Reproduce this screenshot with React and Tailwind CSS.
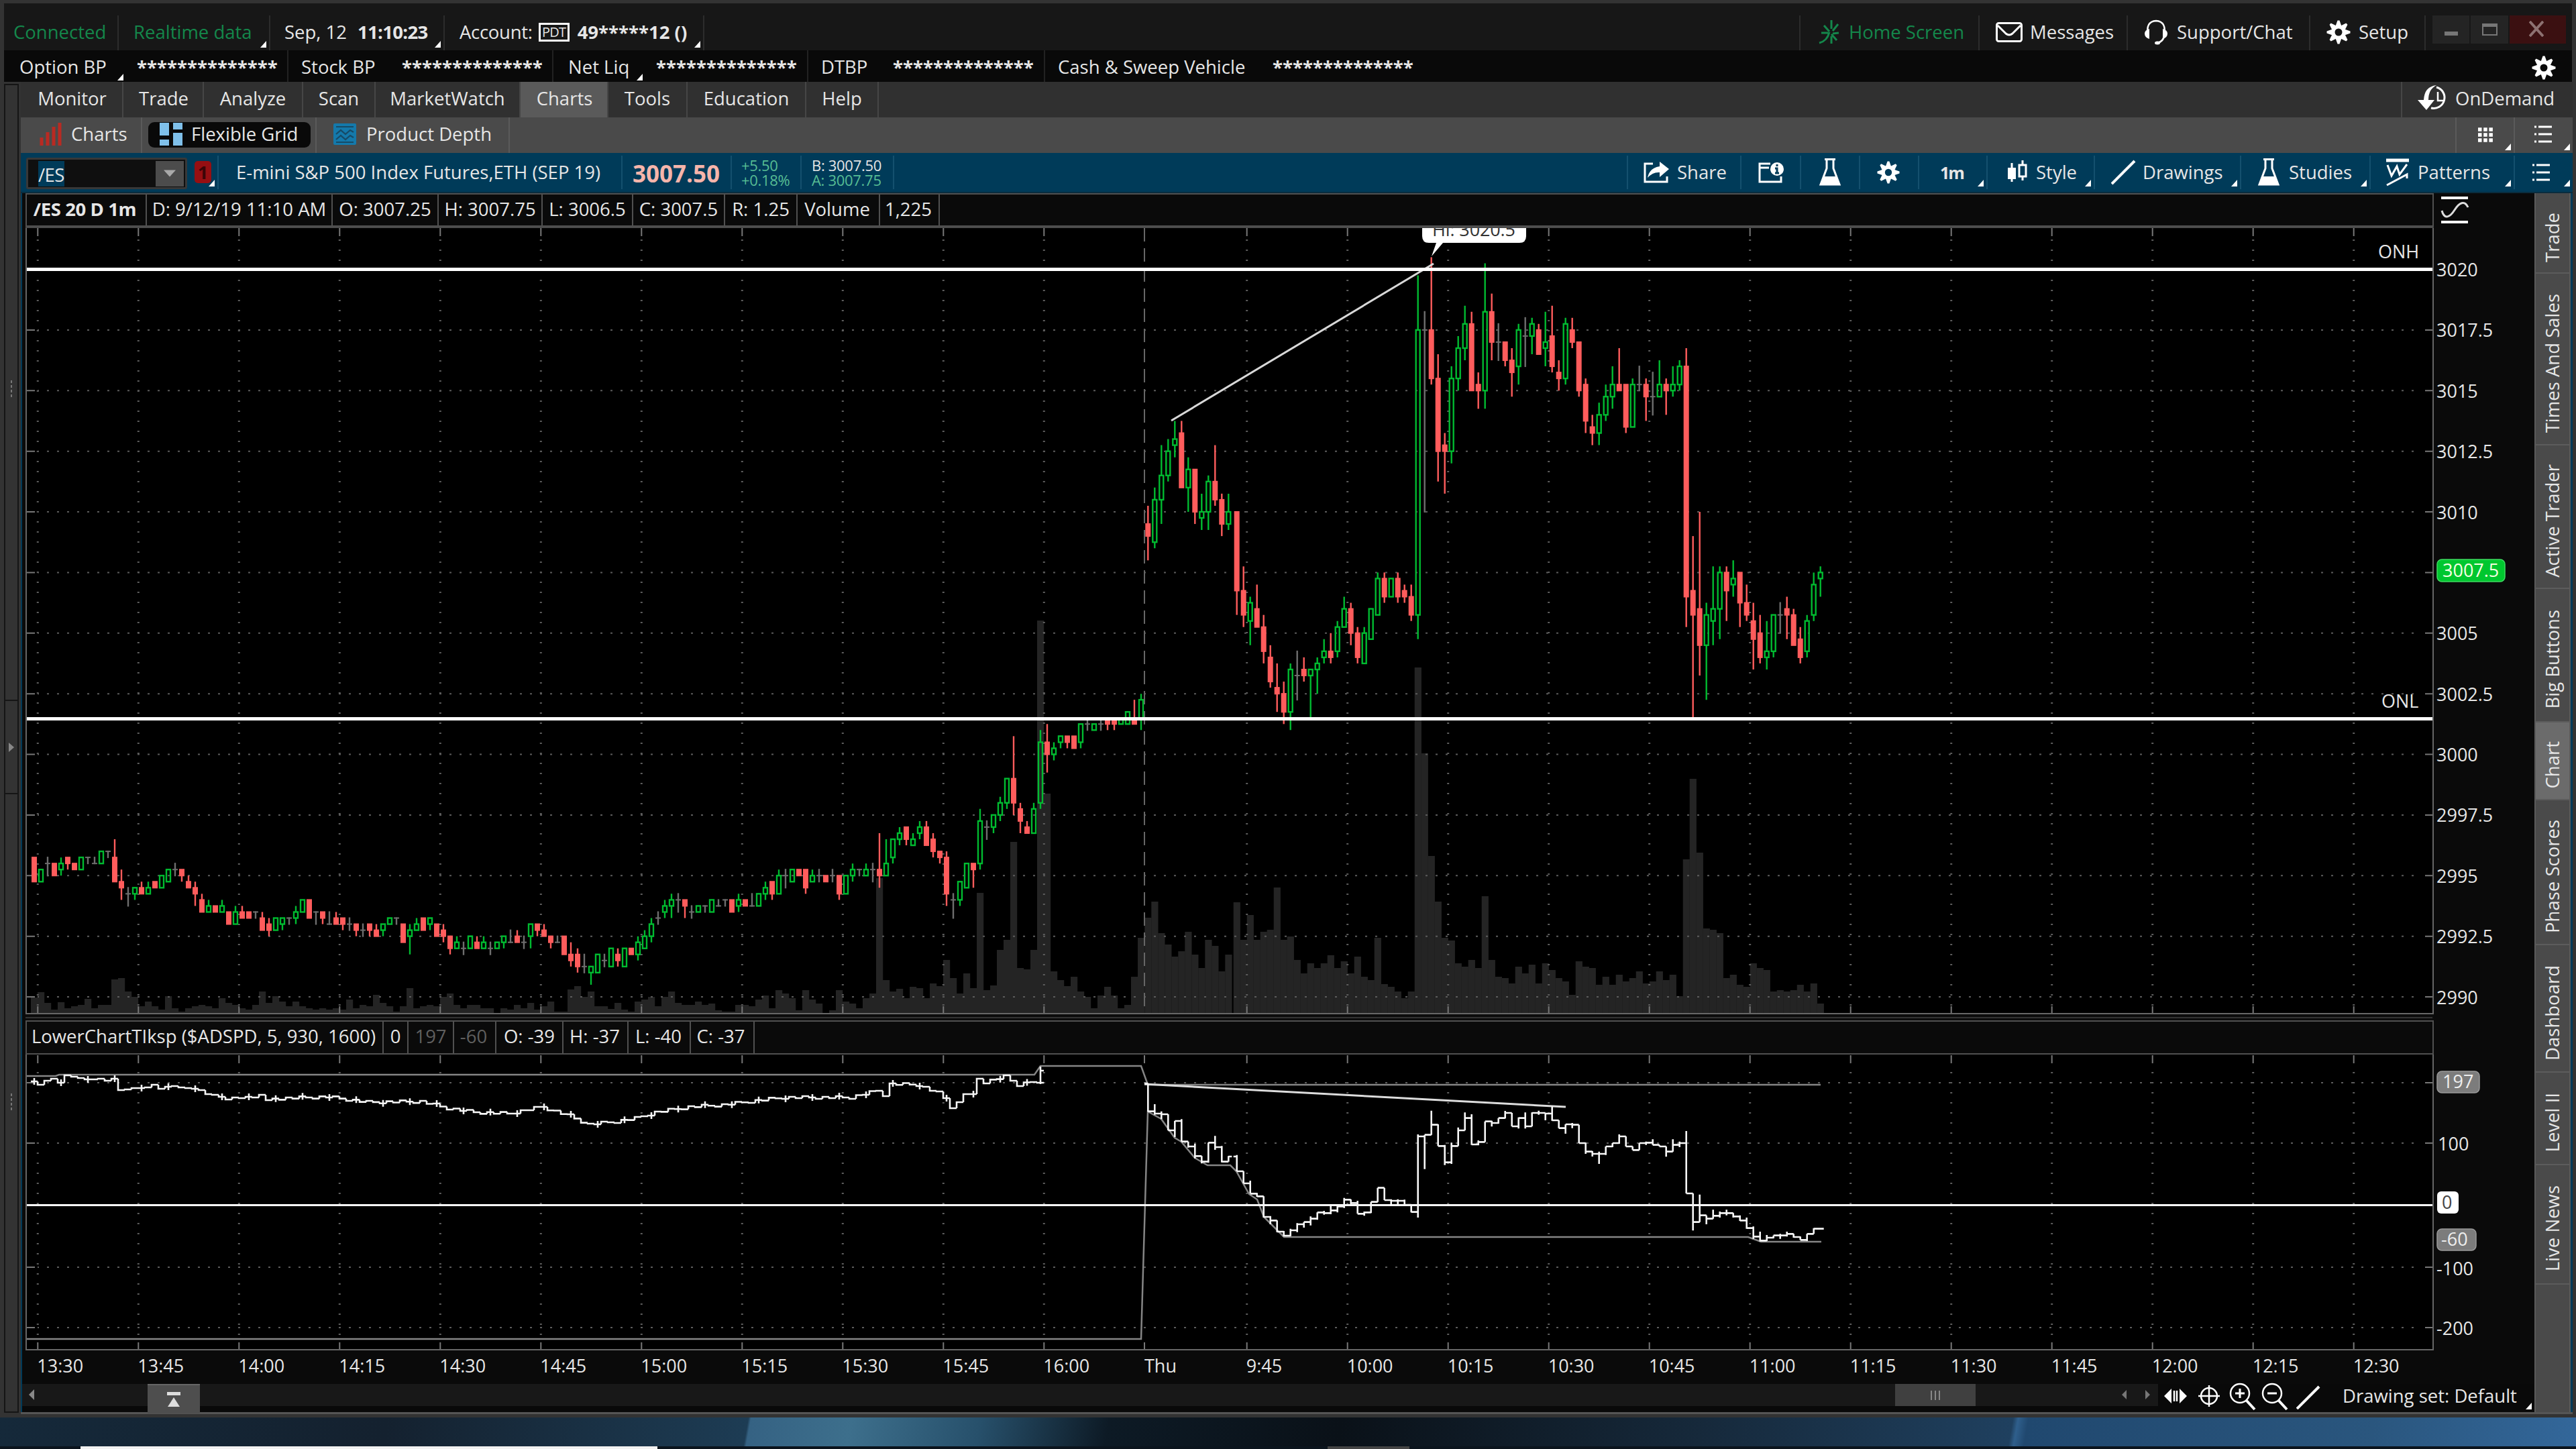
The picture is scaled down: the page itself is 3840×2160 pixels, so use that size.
import React from 'react';

// candle rows: kind, high, body top, body bottom, low (quarter points from the session base)
const DAY1 = `r 3 3 -1 -1,g 1 1 -1 -1,d 3 2 2 0,r 2 2 0 0,g 3 2 1 0,r 3 3 2 1,r 2 2 1 1,g 3 3 1 1,d 3 3 3 2,d 3 2 2 2,
g 4 4 2 2,d 4 4 4 3,r 6 3 -1 -1,r 1 -1 -2 -4,d -2 -3 -3 -5,g -2 -2 -3 -4,r -1 -2 -3 -3,g -1 -2 -3 -3,r -1 -1 -2 -2,g 0 0 -2 -2,
g 1 1 -1 -1,d 2 1 1 0,r 1 1 0 -1,r 0 -1 -2 -2,r -1 -2 -3 -5,r -3 -4 -6 -6,g -4 -5 -6 -6,r -5 -5 -6 -6,g -4 -5 -6 -6,r -6 -6 -8 -8,
g -5 -6 -8 -8,r -5 -6 -7 -7,r -6 -6 -7 -7,d -6 -6 -6 -7,r -6 -7 -9 -9,r -7 -8 -9 -10,g -7 -7 -9 -9,g -7 -7 -8 -9,d -7 -7 -7 -8,g -5 -6 -7 -8,
g -4 -4 -6 -6,r -4 -4 -7 -7,d -6 -6 -6 -8,r -6 -6 -7 -8,d -6 -8 -8 -8,r -6 -7 -8 -8,r -7 -7 -8 -9,d -7 -8 -8 -9,r -8 -8 -9 -10,d -8 -9 -9 -10,
r -8 -8 -9 -10,r -8 -9 -10 -10,g -8 -8 -9 -10,g -7 -7 -8 -8,d -7 -7 -7 -8,r -8 -8 -11 -11,g -8 -9 -10 -13,g -7 -8 -9 -9,r -7 -7 -9 -9,g -7 -7 -8 -9,
r -8 -8 -10 -10,r -8 -9 -10 -11,r -10 -10 -12 -13,g -10 -11 -12 -12,d -11 -12 -12 -13,g -10 -10 -12 -12,r -10 -11 -12 -12,g -10 -11 -12 -12,d -11 -12 -12 -13,g -11 -11 -12 -12,
g -10 -10 -11 -12,d -9 -11 -11 -11,r -9 -10 -11 -11,d -10 -11 -11 -12,g -8 -8 -10 -12,r -8 -8 -9 -10,r -8 -9 -10 -10,r -10 -10 -11 -12,d -10 -11 -11 -11,r -10 -10 -13 -13,
r -11 -13 -14 -15,r -12 -13 -15 -16,d -13 -15 -15 -16,g -15 -15 -16 -18,g -13 -13 -16 -16,d -13 -14 -14 -15,g -12 -12 -15 -15,r -12 -13 -14 -15,g -12 -12 -15 -15,r -12 -12 -13 -13,
g -10 -11 -13 -14,g -9 -10 -12 -12,g -7 -8 -10 -11,d -6 -7 -7 -8,g -4 -5 -6 -7,g -3 -4 -5 -7,d -3 -4 -4 -6,r -4 -4 -5 -7,d -5 -6 -6 -7,g -5 -5 -6 -6,
d -5 -5 -5 -6,g -4 -4 -6 -6,d -4 -5 -5 -5,d -4 -4 -4 -5,r -4 -4 -6 -6,g -3 -4 -5 -6,r -4 -4 -5 -5,d -3 -5 -5 -5,g -3 -3 -5 -5,g -1 -2 -3 -4,
r -1 -1 -3 -4,g 1 0 -3 -3,d 1 0 0 -2,g 1 1 -1 -1,r 1 1 0 0,r 1 1 -2 -3,g 1 0 -1 -1,d 1 0 0 -1,r 0 0 -1 -1,d 1 0 0 -1,
r 0 0 -3 -4,g 0 0 -3 -3,g 2 1 0 -1,d 1 1 1 0,g 2 1 0 0,d 2 1 1 -1,r 7 1 0 -2,g 6 2 0 0,g 6 6 3 2,g 8 7 6 5,
r 8 8 6 5,g 7 6 5 5,g 9 8 7 6,r 9 8 5 5,r 7 6 4 3,r 4 4 3 2,r 4 3 -3 -5,d -3 -4 -4 -7,g -1 -1 -4 -5,g 2 2 -2 -2,
r 2 2 1 -2,g 11 9 2 1,d 9 8 8 6,g 10 10 8 7,g 13 12 10 9,g 16 16 12 11,r 23 16 12 10,r 12 11 9 7,r 9 8 7 7,g 12 11 7 7,
g 24 22 12 11,r 25 22 20 17,g 22 21 20 19,g 23 23 22 21,r 23 23 22 21,r 23 23 21 21,g 25 25 22 21,d 26 25 25 24,g 25 25 24 24,d 26 25 25 24,
r 26 26 25 24,r 26 26 25 24,g 26 26 25 25,g 27 27 25 25,r 29 26 25 25,g 30 29 26 24`;

const DAY2 = `r 1 -2 -4 -8,g 4 2 -5 -6,g 11 6 2 -2,g 12 10 6 5,g 15 12 11 9,r 15 13 4 4,g 9 7 4 0,r 7 7 0 -2,g 3 0 -1 -3,g 6 5 0 -3,
r 11 5 2 1,r 3 2 -2 -4,g 3 0 -2 -3,r 0 0 -13 -17,r -9 -13 -17 -19,g -14 -15 -18 -22,r -12 -16 -19 -19,r -17 -19 -23 -25,r -22 -24 -28 -29,r -25 -29 -30 -33,
r -28 -30 -33 -35,g -25 -26 -33 -36,d -23 -27 -27 -31,r -24 -26 -27 -28,g -26 -26 -27 -34,g -24 -25 -26 -30,g -21 -23 -24 -25,r -20 -23 -24 -25,g -18 -19 -23 -24,g -14 -16 -19 -19,
r -15 -16 -20 -22,r -19 -20 -24 -25,g -19 -20 -25 -25,g -16 -16 -21 -21,g -10 -11 -17 -17,r -10 -11 -14 -15,g -11 -11 -14 -14,r -10 -11 -14 -15,r -12 -13 -14 -15,r -12 -14 -17 -18,
g 39 30 -17 -21,d 33 30 30 0,r 42 30 22 21,r 26 22 10 5,r 13 11 10 3,g 24 22 10 8,g 29 27 22 20,g 34 31 27 25,r 33 31 20 20,r 23 21 20 17,
g 41 33 20 17,r 36 33 28 25,d 31 28 28 25,r 28 28 25 24,r 27 25 23 19,g 31 30 24 21,d 32 29 29 24,g 32 31 29 26,r 31 30 26 26,g 33 28 27 24,
r 34 29 24 23,r 25 23 22 20,g 32 31 22 21,r 32 30 28 27,r 28 28 20 19,r 22 21 15 13,r 16 14 13 11,g 18 16 13 11,g 21 19 16 15,g 24 21 19 17,
r 27 21 20 20,r 21 21 14 13,g 22 21 14 14,d 24 21 21 20,r 22 21 19 15,d 23 19 19 16,g 25 21 19 19,r 22 21 20 16,g 24 21 20 19,g 25 24 21 20,
r 27 24 -14 -19,r -4 -13 -17 -34,r 0 -16 -22 -27,g -15 -17 -22 -31,g -9 -16 -18 -22,g -9 -10 -16 -21,r -9 -10 -13 -18,g -8 -11 -12 -14,r -10 -10 -15 -19,r -12 -15 -17 -18,
r -15 -18 -21 -26,r -17 -20 -24 -25,g -18 -23 -24 -26,g -17 -17 -23 -24,d -15 -17 -17 -20,r -14 -16 -17 -21,r -16 -17 -22 -22,r -19 -21 -24 -25,g -17 -18 -23 -24,g -10 -12 -17 -18,
g -9 -10 -11 -14`;

const VOL1 = [
  24,32,16,6,17,8,11,13,22,8,13,13,51,53,33,25,11,18,11,6,26,8,3,8,11,13,11,8,23,16,13,8,6,13,33,16,26,18,11,18,
  11,8,6,8,6,8,6,21,8,13,11,28,16,11,3,11,38,8,11,13,11,25,30,13,8,13,13,8,8,1,8,6,13,8,16,6,11,18,3,3,
  36,41,25,33,11,11,7,16,6,3,18,21,25,11,25,33,16,13,13,18,13,15,5,3,3,13,13,11,21,27,8,35,30,23,5,35,21,15,1,5,
  35,18,15,8,23,30,202,50,33,37,23,40,38,23,45,41,80,53,30,60,38,180,35,42,95,110,256,68,66,95,586,328,63,50,41,55,33,25,8,27,
  40,27,8,13,55,113,
];
const VOL2 = [
  143,167,120,103,85,93,122,88,68,110,101,63,88,166,110,147,110,122,125,188,110,115,80,60,75,68,75,87,68,78,60,85,55,50,113,44,40,33,23,33,
  516,388,235,167,113,109,75,70,80,68,175,80,55,53,45,70,60,73,45,75,65,53,48,28,78,70,68,43,55,43,58,48,53,63,45,48,63,50,58,26,
  230,350,240,127,125,120,53,58,43,40,75,68,65,33,35,33,35,43,33,45,15,
];

// advance/decline study for Thursday: high, low, close (thirds of a pixel below the panel title)
const STUDY2 = `165 292 290,258 305 300,290 325 303,303 372 375,370 405 333,325 425 425,433 452 447,435 500 490,490 523 515,435 520 430,
400 462 450,445 518 515,490 515 492,485 555 558,558 612 612,600 655 658,655 672 670,672 765 762,758 795 778,778 830 828,
825 850 846,815 848 822,790 830 795,785 810 785,760 800 770,745 775 742,735 752 745,710 750 733,712 742 715,677 722 685,
684 712 700,690 748 748,738 757 742,695 745 695,632 695 632,632 687 687,683 705 690,683 707 690,685 708 708,705 742 740,
393 765 402,395 548 395,287 355 350,348 445 445,440 530 518,430 525 445,362 430 375,295 375 320,303 440 438,420 442 427,
335 427 335,332 358 342,320 345 320,288 322 297,297 357 357,317 367 320,295 367 357,295 357 297,287 305 297,297 330 300,
268 332 330,330 365 365,348 390 348,342 365 350,350 430 432,430 480 470,468 492 480,470 525 480,447 485 447,432 450 432,
393 435 402,402 447 447,447 463 463,432 462 432,425 440 430,415 440 440,440 447 447,447 493 470,415 470 440,425 450 432,
378 655 657,657 823 785,662 760 755,765 795 770,730 770 757,738 765 745,730 755 745,745 765 760,755 780 778,765 815 812,
805 860 850,828 872 868,843 870 855,845 858 845,838 860 845,828 850 838,838 855 852,850 865 865,838 870 838,812 838 815,
815 815 815`;

const STUDY1_HEAD = [12,17,11,8,14,3,5,7,9,9,8,11,8,25,24,22,22,21,17,23,20,19,21,22,23,25,31,32,35,39,36,37,35,36,32,40];
const STUDY1_ANCHORS = [
  [35,38],[44,35],[50,43],[58,42],[62,52],[66,58],[71,60],[76,50],[80,63],[83,76],[87,72],[90,67],[93,58],[98,50],[103,47],
  [107,42],[112,36],[117,36],[122,36],[126,26],[127,32],[128,16],[132,17],[135,29],[136,37],[137,50],[138,44],[139,30],[140,33],[141,8],
  [142,13],[145,5],[147,17],[149,12],[150,16],
];

const parse = (s) => s.split(',').map((row) => row.trim().split(' '));
const x1 = (i) => 51 + i * 10;
const x2 = (i) => (i < 13 ? 1711.3 + i * 10 : 1843.7 + (i - 13) * 10);
const priceY = (p) => 401.5 + (3020 - p) * 36.15;

const range = (from, to, step) => {
  const out = [];
  for (let v = from; v <= to; v += step) out.push(v);
  return out;
};
const GRID_X = [...range(56.3, 1560, 150), ...range(1858.7, 3510, 150)];
const GRID_PRICES = range(2990, 3017.5, 2.5);
const STUDY_GRID = [1614, 1704, 1889, 1979];
const TIMES = [
  '13:30','13:45','14:00','14:15','14:30','14:45','15:00','15:15','15:30','15:45','16:00',
  '9:45','10:00','10:15','10:30','10:45','11:00','11:15','11:30','11:45','12:00','12:15','12:30',
];

const Candles = ({ data, base, xAt }) =>
  parse(data).map((row, i) => {
    const kind = row[0];
    const [h, t, b, l] = row.slice(1).map((n) => priceY(base + Number(n) / 4));
    const x = xAt(i);
    if (kind === 'd') {
      return (
        <g key={i} fill="#6e6e6e">
          <rect x={x - 1.2} y={h - 1} width={2.4} height={Math.max(2, l - h + 2)} />
          <rect x={x - 4} y={t - 1} width={8} height={2} />
        </g>
      );
    }
    if (kind === 'r') {
      return (
        <g key={i} fill="#ff5c5c">
          <rect x={x - 1.2} y={h} width={2.4} height={l - h} />
          <rect x={x - 4} y={t - 1} width={8} height={b - t + 2} />
        </g>
      );
    }
    return (
      <g key={i} fill="none" stroke="#00bb30" strokeWidth={2.4}>
        <path d={`M${x} ${h}V${t}M${x} ${b}V${l}`} />
        <rect x={x - 3} y={t} width={6} height={b - t} />
      </g>
    );
  });

const Volume = ({ data, xAt }) =>
  data.map((h, i) => <rect key={i} x={xAt(i) - 5} y={1511 - h} width={10.2} height={h} fill="#242424" />);

const studyPath1 = () => {
  const ys = [...STUDY1_HEAD];
  for (let a = 0; a < STUDY1_ANCHORS.length - 1; a++) {
    const [i0, v0] = STUDY1_ANCHORS[a];
    const [i1, v1] = STUDY1_ANCHORS[a + 1];
    for (let i = i0 + 1; i <= i1; i++) {
      ys[i] = v0 + ((v1 - v0) * (i - i0)) / (i1 - i0) + (((i * 7) % 5) - 2);
    }
  }
  let d = '';
  ys.forEach((v, i) => {
    const x = x1(i);
    const y = 1600 + v;
    const wick = (i * 11) % 4 === 0 ? 5 : 1;
    d += i === 0 ? `M${x - 5} ${y}` : `V${y}`;
    d += `H${x + 5}M${x} ${y - wick}V${y + wick}M${x + 5} ${y}`;
  });
  return `${d}M1551 1616V1590M1551 1596H1556`;
};

const studyPath2 = () => {
  let d = 'M1706 1616H1711';
  let prev = 165;
  parse(STUDY2).forEach((row, i) => {
    const [h, l, c] = row.map((n) => 1560 + Number(n) / 3);
    const x = x2(i);
    const p = 1560 + prev / 3;
    d += `M${x - 5} ${p}H${x}M${x} ${Math.min(h, p, c)}V${Math.max(l, p, c)}M${x} ${c}H${x + 5}`;
    prev = Number(row[2]);
  });
  return d;
};

const Tri = () => (
  <svg className="absolute right-[4px] bottom-[4px] w-[9px] h-[10px]" viewBox="0 0 9 10">
    <path d="M9 0V10H0Z" fill="#fff" />
  </svg>
);

const Gear = ({ className }) => (
  <svg className={className} viewBox="-18 -18 36 36">
    {[0, 45, 90, 135, 180, 225, 270, 315].map((a) => (
      <path key={a} d="M-4.5 -9L-1.5 -17.5H1.5L4.5 -9Z" fill="#fff" transform={`rotate(${a})`} />
    ))}
    <circle r="8" fill="none" stroke="#fff" strokeWidth="5" />
  </svg>
);

const Flask = () => (
  <svg className="w-[34px] h-[42px]" viewBox="0 0 34 42">
    <path d="M9 1.5H25M12 2V15L3 39H31L22 15V2" fill="none" stroke="#fff" strokeWidth="3" />
    <path d="M8 27H26L31 40H3Z" fill="#fff" />
  </svg>
);

const ListIcon = () => (
  <svg className="w-[26px] h-[26px]" viewBox="0 0 26 26">
    <path d="M0 2H3M6 2H26M0 13H3M6 13H26M0 24H3M6 24H26" stroke="#fff" strokeWidth="3" />
  </svg>
);

const TopBar = () => (
  <div className="mx-[6px] h-[70px] bg-[#171717] pt-[18px] pr-[9px] flex">
    <div className="w-[171px] border-r-2 border-[#2c2c2c] pl-[14px] pb-[3px] flex items-center text-[#14874b]">Connected</div>
    <div className="relative w-[226px] border-r-2 border-[#2c2c2c] pl-[22px] pb-[3px] flex items-center text-[#14874b]">
      Realtime data
      <Tri />
    </div>
    <div className="relative w-[260px] border-r-2 border-[#2c2c2c] pl-[21px] pb-[3px] flex items-center">
      Sep, 12 <b className="ml-[16px] tracking-[-0.7px]">11:10:23</b>
      <Tri />
    </div>
    <div className="relative w-[387px] border-r-2 border-[#2c2c2c] pl-[22px] pb-[3px] flex items-center">
      <span className="tracking-[-0.3px]">Account:</span>
      <span className="ml-[9px] w-[46px] h-[28px] border-[3px] border-white text-[20px] leading-[21px] flex justify-center tracking-[-0.8px]">PDT</span>
      <b className="ml-[12px]">49*****12 ()</b>
      <Tri />
    </div>
    <div className="flex-1 border-r-2 border-[#2c2c2c]" />
    <div className="w-[267px] border-r-2 border-[#2c2c2c] pl-[26px] pb-[3px] flex items-center text-[#14874b]">
      <svg className="w-[32px] h-[36px] mr-[14px]" viewBox="0 0 32 36">
        <path d="M20 0V13M9 8L17 17M30 6L22 16M5 19H15M31 19L22 20M28 30L20 21M20 35V24M2 34C10 32 15 26 17 18" fill="none" stroke="#14874b" strokeWidth="3" />
      </svg>
      Home Screen
    </div>
    <div className="w-[221px] border-r-2 border-[#2c2c2c] pl-[24px] pb-[3px] flex items-center">
      <svg className="w-[40px] h-[30px] mr-[11px]" viewBox="0 0 40 30">
        <rect x="1.5" y="1.5" width="37" height="27" rx="3" fill="none" stroke="#fff" strokeWidth="3" />
        <path d="M3 5L15 17Q20 21 25 17L37 5" fill="none" stroke="#fff" strokeWidth="3" />
      </svg>
      Messages
    </div>
    <div className="w-[272px] border-r-2 border-[#2c2c2c] pl-[24px] pb-[3px] flex items-center">
      <svg className="w-[36px] h-[38px] mr-[13px]" viewBox="0 0 36 38">
        <path d="M6 24Q2 3 18 2Q34 3 30 24Q29 33 20 35" fill="none" stroke="#fff" strokeWidth="2.5" />
        <path d="M8 14V29Q1 27 1 21Q1 16 8 14ZM28 14V29Q35 27 35 21Q35 16 28 14Z" fill="#fff" />
        <ellipse cx="20" cy="35" rx="4" ry="2.5" fill="#fff" />
      </svg>
      Support/Chat
    </div>
    <div className="w-[172px] border-r-2 border-[#2c2c2c] pl-[24px] pb-[3px] flex items-center">
      <Gear className="w-[36px] h-[36px] mr-[12px]" />
      Setup
    </div>
    <div className="ml-[10px] h-[42px] flex gap-[2px]">
      <div className="w-[55px] bg-[#242424] flex justify-center pt-[24px]"><div className="w-[20px] h-[6px] bg-[#777]" /></div>
      <div className="w-[56px] bg-[#242424] flex justify-center pt-[12px]"><div className="w-[23px] h-[18px] border-2 border-t-[5px] border-[#777]" /></div>
      <div className="w-[84px] bg-[#3b1011] flex justify-center pr-[4px] pt-[8px]">
        <svg className="w-[22px] h-[24px]" viewBox="0 0 22 24"><path d="M1 1L21 23M21 1L1 23" stroke="#8d7272" strokeWidth="4" /></svg>
      </div>
    </div>
  </div>
);

const STARS = '**************';

const BalanceBar = () => (
  <div className="mx-[6px] h-[47px] bg-[#090909] flex items-stretch">
    {[
      ['Option BP', 'w-[424px] pl-[23px]', 'w-[175px]', true],
      ['Stock BP', 'w-[395px] pl-[19px]', 'w-[150px]', false],
      ['Net Liq', 'w-[380px] pl-[22px]', 'w-[131px]', true],
      ['DTBP', 'w-[353px] pl-[19px]', 'w-[107px]', false],
      ['Cash & Sweep Vehicle', 'w-[560px] pl-[19px] border-r-0!', 'w-[320px]', false],
    ].map(([label, cls, labelCls, tri]) => (
      <div key={label} className={`${cls} border-r-2 border-[#222] flex items-center pt-[2px]`}>
        <div className={`${labelCls} relative h-full flex items-center`}>
          {label}
          {tri && <svg className="absolute right-[20px] bottom-[2px] w-[9px] h-[10px]" viewBox="0 0 9 10"><path d="M9 0V10H0Z" fill="#fff" /></svg>}
        </div>
        <b>{STARS}</b>
      </div>
    ))}
    <div className="flex-1" />
    <Gear className="w-[36px] h-[36px] mt-[8px] mr-[24px]" />
  </div>
);

const MenuBar = () => (
  <div className="h-[53px] bg-[#303030] flex">
    {[
      ['Monitor', 'w-[153px] pl-[2px]'],
      ['Trade', 'w-[120px] pl-[2px]'],
      ['Analyze', 'w-[148px]'],
      ['Scan', 'w-[108px]'],
      ['MarketWatch', 'w-[216px]'],
      ['Charts', 'w-[131px] pl-[2px] bg-[#5a5a5a]'],
      ['Tools', 'w-[118px]'],
      ['Education', 'w-[177px]'],
      ['Help', 'w-[108px]'],
    ].map(([label, cls]) => (
      <div key={label} className={`${cls} border-r-2 border-[#464646] pb-[3px] flex items-center justify-center`}>{label}</div>
    ))}
    <div className="flex-1 border-r-2 border-[#464646]" />
    <div className="w-[254px] pl-[23px] pb-[3px] flex items-center">
      <svg className="w-[47px] h-[40px] mr-[9px]" viewBox="0 0 47 40">
        <path d="M28 3A16 16 0 1 1 20 34" fill="none" stroke="#fff" strokeWidth="3" />
        <path d="M28 0Q16 6 16 22H25L13 37L0 22H9Q10 2 28 0Z" fill="#fff" />
        <path d="M30 10V23H38" fill="none" stroke="#fff" strokeWidth="2.5" />
      </svg>
      OnDemand
    </div>
  </div>
);

const TabBar = () => (
  <div className="h-[53px] bg-[#4a4a4a] flex">
    <div className="w-[181px] border-r-2 border-[#5a5a5a] pl-[28px] pb-[4px] flex items-center">
      <svg className="w-[34px] h-[34px] mr-[13px]" viewBox="0 0 34 34">
        <path d="M3 34V22M12 34V14M21 34V6M30 34V0" stroke="#b92a22" strokeWidth="5" />
      </svg>
      Charts
    </div>
    <div className="w-[260px] border-r-2 border-[#5a5a5a] pl-[9px] pt-[7px]">
      <div className="w-[242px] h-[38px] rounded-[9px] bg-[#090909] pl-[17px] pb-[2px] flex items-center">
        <svg className="w-[34px] h-[34px] mr-[13px]" viewBox="0 0 34 34">
          <path d="M0 0H14V19H0ZM20 0H34V10H20ZM0 25H14V34H0ZM20 15H34V34H20Z" fill="#7fc0ea" />
        </svg>
        Flexible Grid
      </div>
    </div>
    <div className="w-[288px] border-r-2 border-[#5a5a5a] pl-[25px] pb-[4px] flex items-center">
      <svg className="w-[34px] h-[32px] mr-[15px]" viewBox="0 0 34 32">
        <rect width="34" height="32" rx="2" fill="#1479ab" />
        <path d="M4 5H30M4 16L11 10L18 16L25 10L30 13M4 24L11 18L18 24L25 18L30 21M4 28H30" fill="none" stroke="#174a66" strokeWidth="2.2" />
      </svg>
      Product Depth
    </div>
    <div className="flex-1 border-r-2 border-[#5a5a5a]" />
    <div className="relative w-[87px] border-r-2 border-[#5a5a5a] pl-[32px] pt-[15px]">
      <svg className="w-[22px] h-[22px]" viewBox="0 0 22 22">
        <path d="M0 3H22M0 11H22M0 19H22" stroke="#fff" strokeWidth="5.5" strokeDasharray="5.5 2.7" />
      </svg>
      <Tri />
    </div>
    <div className="relative w-[86px] pl-[29px] pt-[12px]"><ListIcon /><Tri /></div>
  </div>
);

const SymbolBar = () => (
  <div className="h-[60px] bg-[#003b59] border-b-2 border-[#0a2c3e] flex items-stretch py-[4px]">
    <div className="w-[293px] pl-[8px] pt-[3px] relative flex">
      <div className="w-[240px] h-[47px] border-[3px] border-[#383838] rounded-[3px] bg-[#0f0f0f] flex items-center">
        <span className="ml-[15px] h-[38px] bg-[#003b59] leading-[42px] tracking-[-0.6px]">/ES</span>
        <div className="ml-auto mr-[2px] w-[42px] h-[38px] bg-[#4c4c4c] flex items-center justify-center">
          <svg className="w-[18px] h-[11px]" viewBox="0 0 20 11"><path d="M0 0H20L10 11Z" fill="#a9a9a9" /></svg>
        </div>
      </div>
      <div className="ml-[11px] mt-[5px] w-[25px] h-[33px] rounded-[5px] bg-[#960f12] text-[#3b0507] font-bold text-center leading-[33px]">1</div>
      <Tri />
    </div>
    <div className="w-[604px] border-x-2 border-[#14506e] pl-[26px] flex items-center">E-mini S&amp;P 500 Index Futures,ETH (SEP 19)</div>
    <div className="w-[163px] border-r-2 border-[#14506e] pl-[15px] pt-[3px] flex items-center text-[35px] font-bold text-[#f6b5ab]">3007.50</div>
    <div className="w-[104px] border-r-2 border-[#14506e] pl-[14px] flex flex-col justify-center text-[22px] leading-[22px] text-[#57bd94] tracking-[-0.3px]">
      <span>+5.50</span>
      <span>+0.18%</span>
    </div>
    <div className="w-[138px] border-r-2 border-[#14506e] pl-[15px] flex flex-col justify-center text-[22px] leading-[22px] tracking-[-0.3px]">
      <span>B: 3007.50</span>
      <span className="text-[#57bd94]">A: 3007.75</span>
    </div>
    <div className="flex-1 border-r-2 border-[#14506e]" />
    <div className="w-[169px] border-r-2 border-[#14506e] pl-[23px] flex items-center">
      <svg className="w-[38px] h-[32px] mr-[12px]" viewBox="0 0 38 32">
        <path d="M14 3H2V30H35V22" fill="none" stroke="#fff" strokeWidth="3" />
        <path d="M24 0L38 11L24 23V16Q14 15 6 24Q9 9 24 7Z" fill="#fff" />
      </svg>
      Share
    </div>
    <div className="w-[89px] border-r-2 border-[#14506e] flex items-center justify-center">
      <svg className="w-[38px] h-[32px]" viewBox="0 0 38 32">
        <path d="M18 3H2V30H34V22M2 9H16" fill="none" stroke="#fff" strokeWidth="3" />
        <circle cx="28" cy="11" r="10" fill="#fff" />
        <path d="M28 4V7M25 10H28V17M25 17H31" stroke="#003b59" strokeWidth="3" fill="none" />
      </svg>
    </div>
    <div className="w-[88px] border-r-2 border-[#14506e] flex items-center justify-center"><Flask /></div>
    <div className="w-[88px] border-r-2 border-[#14506e] flex items-center justify-center pr-[3px]"><Gear className="w-[34px] h-[34px]" /></div>
    <div className="relative w-[102px] border-r-2 border-[#14506e] pl-[31px] flex items-center font-bold text-[25px] tracking-[-2px]">1m<Tri /></div>
    <div className="relative w-[160px] border-r-2 border-[#14506e] pl-[29px] flex items-center">
      <svg className="w-[30px] h-[36px] mr-[13px]" viewBox="0 0 30 36">
        <path d="M7 4V32M23 0V6M23 24V30" stroke="#fff" strokeWidth="3" />
        <rect x="1" y="11" width="12" height="17" fill="#fff" />
        <rect x="18" y="7" width="10" height="17" fill="none" stroke="#fff" strokeWidth="3" />
      </svg>
      Style
      <Tri />
    </div>
    <div className="relative w-[218px] border-r-2 border-[#14506e] pl-[24px] flex items-center">
      <svg className="w-[37px] h-[38px] mr-[10px]" viewBox="0 0 37 38"><path d="M1 36L35 2" stroke="#fff" strokeWidth="4" /></svg>
      Drawings
      <Tri />
    </div>
    <div className="relative w-[193px] border-r-2 border-[#14506e] pl-[24px] flex items-center gap-[13px]"><Flask />Studies<Tri /></div>
    <div className="relative w-[215px] border-r-2 border-[#14506e] pl-[23px] flex items-center">
      <svg className="w-[34px] h-[42px] mr-[13px]" viewBox="0 0 34 42">
        <path d="M0 3H34" stroke="#fff" strokeWidth="5" />
        <path d="M2 10L8 26L16 12L20 24L31 9M1 40L31 24V30" fill="none" stroke="#fff" strokeWidth="3" />
      </svg>
      Patterns
      <Tri />
    </div>
    <div className="relative w-[86px] pl-[26px] pt-[12px]"><ListIcon /><Tri /></div>
  </div>
);

const QuoteRow = () => (
  <div className="h-[50px] bg-[#0a0a0a] border-2 border-[#505050] flex">
    {[
      ['/ES 20 D 1m', 'w-[179px] font-bold tracking-[-0.4px] pr-[4px]'],
      ['D: 9/12/19 11:10 AM', 'w-[277px]'],
      ['O: 3007.25', 'w-[158px]'],
      ['H: 3007.75', 'w-[155px]'],
      ['L: 3006.5', 'w-[135px]'],
      ['C: 3007.5', 'w-[137px]'],
      ['R: 1.25', 'w-[108px]'],
      ['Volume', 'w-[123px] pr-[3px]'],
      ['1,225', 'w-[89px] pr-[3px]'],
    ].map(([label, cls]) => (
      <div key={label} className={`${cls} border-r-2 border-[#505050] pb-[3px] flex items-center justify-center`}>{label}</div>
    ))}
  </div>
);

const StudyRow = () => (
  <div className="h-[51px] bg-[#0a0a0a] border-2 border-[#505050] flex">
    {[
      ['LowerChartTIksp ($ADSPD, 5, 930, 1600)', 'w-[532px] pr-[3px]'],
      ['0', 'w-[37px]'],
      ['197', 'w-[68px] text-[#5f5f5f]'],
      ['-60', 'w-[63px] text-[#5f5f5f] pr-[3px]'],
      ['O: -39', 'w-[100px]'],
      ['H: -37', 'w-[97px] pr-[2px]'],
      ['L: -40', 'w-[93px] pr-[2px]'],
      ['C: -37', 'w-[95px] pr-[4px]'],
    ].map(([label, cls]) => (
      <div key={label} className={`${cls} border-r-2 border-[#505050] pb-[3px] flex items-center justify-center`}>{label}</div>
    ))}
  </div>
);

const PriceChart = () => (
  <svg className="block w-[3590px] h-[1183px] bg-black" viewBox="38 338 3590 1183">
    <Volume data={VOL1} xAt={x1} />
    <Volume data={VOL2} xAt={x2} />
    <g stroke="#5c5c5c" strokeWidth="2" strokeDasharray="3 12">
      {GRID_X.map((x) => <path key={x} d={`M${x} 357V1500`} strokeWidth="3" strokeDasharray="2 13" />)}
      {GRID_PRICES.map((p) => <path key={p} d={`M56 ${priceY(p)}H3600`} strokeDashoffset="1" />)}
    </g>
    <g stroke="#777" strokeWidth="2">
      {GRID_X.map((x) => <path key={x} d={`M${x} 340V352M${x} 1500V1511`} />)}
      {GRID_PRICES.map((p) => <path key={p} d={`M40 ${priceY(p)}H52M3615 ${priceY(p)}H3626`} />)}
    </g>
    <path d="M1706 340V1511" stroke="#666" strokeWidth="2" strokeDasharray="20 10" />
    <Candles data={DAY1} base={2995} xAt={x1} />
    <Candles data={DAY2} base={3010} xAt={x2} />
    <path d="M1746 627L2137 393" stroke="#d8d8d8" strokeWidth="3" />
    <path d="M40 401.5H3626M40 1071.5H3626" stroke="#fff" strokeWidth="5" />
    <path d="M2120 340H2275V352Q2275 362 2265 362H2151L2134 382L2141 362H2130Q2120 362 2120 352Z" fill="#fff" />
    <text x="2135" y="352" fontSize="27" fill="#333" textLength="124">Hi: 3020.5</text>
    <g fill="#e6e6e6" fontSize="27">
      <text x="3545" y="385">ONH</text>
      <text x="3550" y="1055">ONL</text>
    </g>
    <rect x="38" y="1512" width="3590" height="9" fill="#0c0c0c" />
    <path d="M38 1517H3626" stroke="#333" strokeWidth="2" />
    <path d="M39 338V1511H3627V338" fill="none" stroke="#666" strokeWidth="2" />
    <rect x="38" y="336" width="3590" height="4" fill="#4a4a4a" />
  </svg>
);

const StudyChart = () => (
  <svg className="block w-[3590px] h-[491px] bg-[#0a0a0a]" viewBox="38 1572 3590 491">
    <rect x="38" y="1572" width="3590" height="440" fill="#000" />
    <g stroke="#5c5c5c" strokeWidth="2" strokeDasharray="3 12">
      {GRID_X.map((x) => <path key={x} d={`M${x} 1598V2000`} strokeWidth="3" strokeDasharray="2 13" />)}
      {STUDY_GRID.map((y) => <path key={y} d={`M56 ${y}H3600`} strokeDashoffset="1" />)}
    </g>
    <g stroke="#777" strokeWidth="2">
      {GRID_X.map((x) => <path key={x} d={`M${x} 1573V1585M${x} 2001V2011`} />)}
      {STUDY_GRID.map((y) => <path key={y} d={`M40 ${y}H52M3615 ${y}H3626`} />)}
      <path d="M1706 1573V1585M1706 2001V2011" />
    </g>
    <path d="M40 1604H83L88 1602H1542L1551 1589H1701L1711 1617H2714" fill="none" stroke="#858585" strokeWidth="2.5" />
    <path
      d="M40 1996H1701L1711 1657L1731 1668L1751 1696L1761 1702L1781 1726L1800 1737H1834L1843 1746L1862 1780L1874 1788L1884 1814L1914 1844H2606L2625 1851H2715"
      fill="none" stroke="#858585" strokeWidth="2.5"
    />
    <path d="M1706 1616L2334 1650" stroke="#dcdcdc" strokeWidth="3" />
    <path d="M40 1796.5H3626" stroke="#fff" strokeWidth="3" />
    <path d={studyPath1()} fill="none" stroke="#f6f6f6" strokeWidth="2.6" />
    <path d={studyPath2()} fill="none" stroke="#f6f6f6" strokeWidth="2.6" />
    <path d="M39 1572V2012H3627V1572" fill="none" stroke="#666" strokeWidth="2" />
    <g fill="#e6e6e6" fontSize="27">
      {TIMES.map((t, i) => <text key={t} x={GRID_X[i] - 1} y="2046">{t}</text>)}
      <text x="1706" y="2046">Thu</text>
    </g>
  </svg>
);

const Axis = () => (
  <svg className="block w-[150px] h-[1775px] bg-[#0a0a0a]" viewBox="3628 288 150 1775">
    <path d="M3639 295H3679M3639 331H3679" stroke="#fff" strokeWidth="4" />
    <path d="M3640 314C3644 328 3652 324 3659 313S3674 298 3679 309" fill="none" stroke="#ddd" strokeWidth="3" />
    <g fill="#e6e6e6" fontSize="27">
      {[...GRID_PRICES, 3020].filter((p) => p !== 3007.5).map((p) => (
        <text key={p} x="3632" y={priceY(p) + 10.5}>{p}</text>
      ))}
      <text x="3634" y="1715">100</text>
      <text x="3632" y="1901">-100</text>
      <text x="3632" y="1990">-200</text>
    </g>
    <rect x="3633" y="834" width="101" height="33" rx="7" fill="#00c72f" stroke="#3fdc62" strokeWidth="1.5" />
    <text x="3641" y="860" fontSize="27" fill="#f4ffe0">3007.5</text>
    <rect x="3633" y="1597" width="63" height="32" rx="7" fill="#7c7c7c" stroke="#999" strokeWidth="1.5" />
    <text x="3641" y="1622" fontSize="27" fill="#eee">197</text>
    <rect x="3633" y="1776" width="32" height="33" rx="6" fill="#fff" />
    <text x="3640" y="1802" fontSize="27" fill="#444">0</text>
    <rect x="3633" y="1832" width="58" height="32" rx="7" fill="#7c7c7c" stroke="#999" strokeWidth="1.5" />
    <text x="3639" y="1857" fontSize="27" fill="#eee">-60</text>
  </svg>
);

const ScrollRow = () => (
  <div className="h-[42px] bg-[#090909] flex">
    <div className="w-[3184px] h-[33px] bg-[#181818] flex">
      <svg className="mt-[8px] ml-[10px] w-[8px] h-[16px]" viewBox="0 0 8 16"><path d="M8 0V16L0 8Z" fill="#888" /></svg>
      <div className="ml-[169px] w-[78px] h-[44px] bg-[#4e4e4e] border-t-2 border-[#666] flex flex-col items-center pt-[10px] gap-[3px]">
        <div className="w-[20px] h-[5px] bg-[#ddd]" />
        <svg className="w-[18px] h-[14px]" viewBox="0 0 18 14"><path d="M9 0L18 14H0Z" fill="#ddd" /></svg>
      </div>
      <div className="ml-[2527px] w-[120px] bg-[#404040] flex items-center justify-center gap-[4px]">
        <div className="w-[2px] h-[14px] bg-[#888]" />
        <div className="w-[2px] h-[14px] bg-[#888]" />
        <div className="w-[2px] h-[14px] bg-[#888]" />
      </div>
      <svg className="ml-[217px] mt-[8px] w-[44px] h-[16px]" viewBox="0 0 44 16">
        <path d="M8 1V15L1 8ZM36 1V15L43 8Z" fill="#777" />
      </svg>
    </div>
    <div className="ml-[8px] flex items-start">
      <svg className="w-[36px] h-[36px]" viewBox="0 0 36 36">
        <path d="M12 7V29L1 18ZM24 7V29L35 18Z" fill="#fff" />
        <path d="M16 10V26M20 10V26" stroke="#fff" strokeWidth="2.5" />
      </svg>
      <svg className="ml-[14px] w-[36px] h-[36px]" viewBox="0 0 36 36">
        <circle cx="18" cy="18" r="12" fill="none" stroke="#fff" strokeWidth="2.5" />
        <path d="M18 2V34M2 18H34" stroke="#fff" strokeWidth="2.5" />
      </svg>
      <svg className="ml-[11px] mt-[-2px] w-[42px] h-[42px]" viewBox="0 0 42 42">
        <circle cx="17" cy="16" r="14" fill="none" stroke="#fff" strokeWidth="2.5" />
        <path d="M27 27L39 40" stroke="#fff" strokeWidth="4" />
        <path d="M10 16H24M17 9V23" stroke="#fff" strokeWidth="3" />
      </svg>
      <svg className="ml-[6px] mt-[-2px] w-[42px] h-[42px]" viewBox="0 0 42 42">
        <circle cx="17" cy="16" r="14" fill="none" stroke="#fff" strokeWidth="2.5" />
        <path d="M27 27L39 40" stroke="#fff" strokeWidth="4" />
        <path d="M10 16H24" stroke="#fff" strokeWidth="3" />
      </svg>
      <svg className="ml-[11px] mt-[2px] w-[36px] h-[36px]" viewBox="0 0 36 36"><path d="M1 35L34 2" stroke="#fff" strokeWidth="4" /></svg>
    </div>
    <div className="relative flex-1 pl-[33px] leading-[35px]">
      Drawing set: Default
      <Tri />
    </div>
  </div>
);

const SideTabs = () => (
  <div className="w-[54px] h-[1817px] bg-[#4a4a4a] border-x-2 border-[#5a5a5a] flex flex-col">
    {[
      ['Trade', 'h-[120px]'],
      ['Times And Sales', 'h-[256px]'],
      ['Active Trader', 'h-[214px]'],
      ['Big Buttons', 'h-[199px]'],
      ['Chart', 'h-[116px] bg-[#6b6b6b]'],
      ['Phase Scores', 'h-[216px]'],
      ['Dashboard', 'h-[190px]'],
      ['Level II', 'h-[138px]'],
      ['Live News', 'h-[178px]'],
    ].map(([label, cls]) => (
      <div key={label} className={`${cls} border-b-2 border-[#5c5c5c] flex items-center justify-center pt-[13px]`}>
        <span className="[writing-mode:vertical-rl] rotate-180">{label}</span>
      </div>
    ))}
  </div>
);

const Grip = () => (
  <svg className="w-[4px] h-[26px]" viewBox="0 0 4 26"><path d="M2 0V26" stroke="#777" strokeWidth="2" strokeDasharray="4 3" /></svg>
);

const LeftStrip = () => (
  <div className="w-[31px] pl-[6px] pt-[3px]">
    <div className="w-[22px] h-[1981px] border-2 border-[#151515] bg-[#333] flex flex-col items-center">
      <div className="h-[916px] pt-[440px]"><Grip /></div>
      <div className="h-[141px] w-full border-y-2 border-[#151515] flex items-center justify-center">
        <svg className="w-[8px] h-[14px]" viewBox="0 0 8 14"><path d="M0 0L8 7L0 14Z" fill="#888" /></svg>
      </div>
      <div className="pt-[446px]"><Grip /></div>
    </div>
  </div>
);

export default function App() {
  return (
    <div className="w-[3840px] h-[2160px] overflow-hidden bg-[#333] text-[#e6e6e6] text-[27.5px] leading-none whitespace-nowrap font-['Open_Sans','Noto_Sans',sans-serif]">
      <div className="h-[5px]" />
      <TopBar />
      <BalanceBar />
      <div className="h-[1991px] flex">
        <LeftStrip />
        <div className="w-[3804px]">
          <MenuBar />
          <TabBar />
          <SymbolBar />
          <div className="flex border-l-2 border-r-[3px] border-[#003b59] bg-[#0a0a0a]">
            <div className="w-[3745px]">
              <div className="flex">
                <div className="ml-[5px] w-[3590px]">
                  <QuoteRow />
                  <PriceChart />
                  <StudyRow />
                  <StudyChart />
                </div>
                <Axis />
              </div>
              <ScrollRow />
            </div>
            <SideTabs />
          </div>
          <div className="h-[3px] bg-[#555]" />
        </div>
      </div>
      <div className="h-[43px] bg-[linear-gradient(100deg,#15293a_0%,#14212f_15%,#1d3c54_29%,#356283_29.1%,#3d6f8c_33%,#27506b_38%,#0d1a25_43%,#0a1118_52%,#16293b_66%,#1f405f_78%,#2f5f8c_78.2%,#20486f_78.6%,#2a567e_92%,#33679a_100%)]" />
      <div className="h-[4px] bg-[#0b141d] flex">
        <div className="ml-[120px] w-[860px] bg-[#f2f2f2]" />
        <div className="ml-[999px] w-[122px] bg-[#444]" />
      </div>
    </div>
  );
}
